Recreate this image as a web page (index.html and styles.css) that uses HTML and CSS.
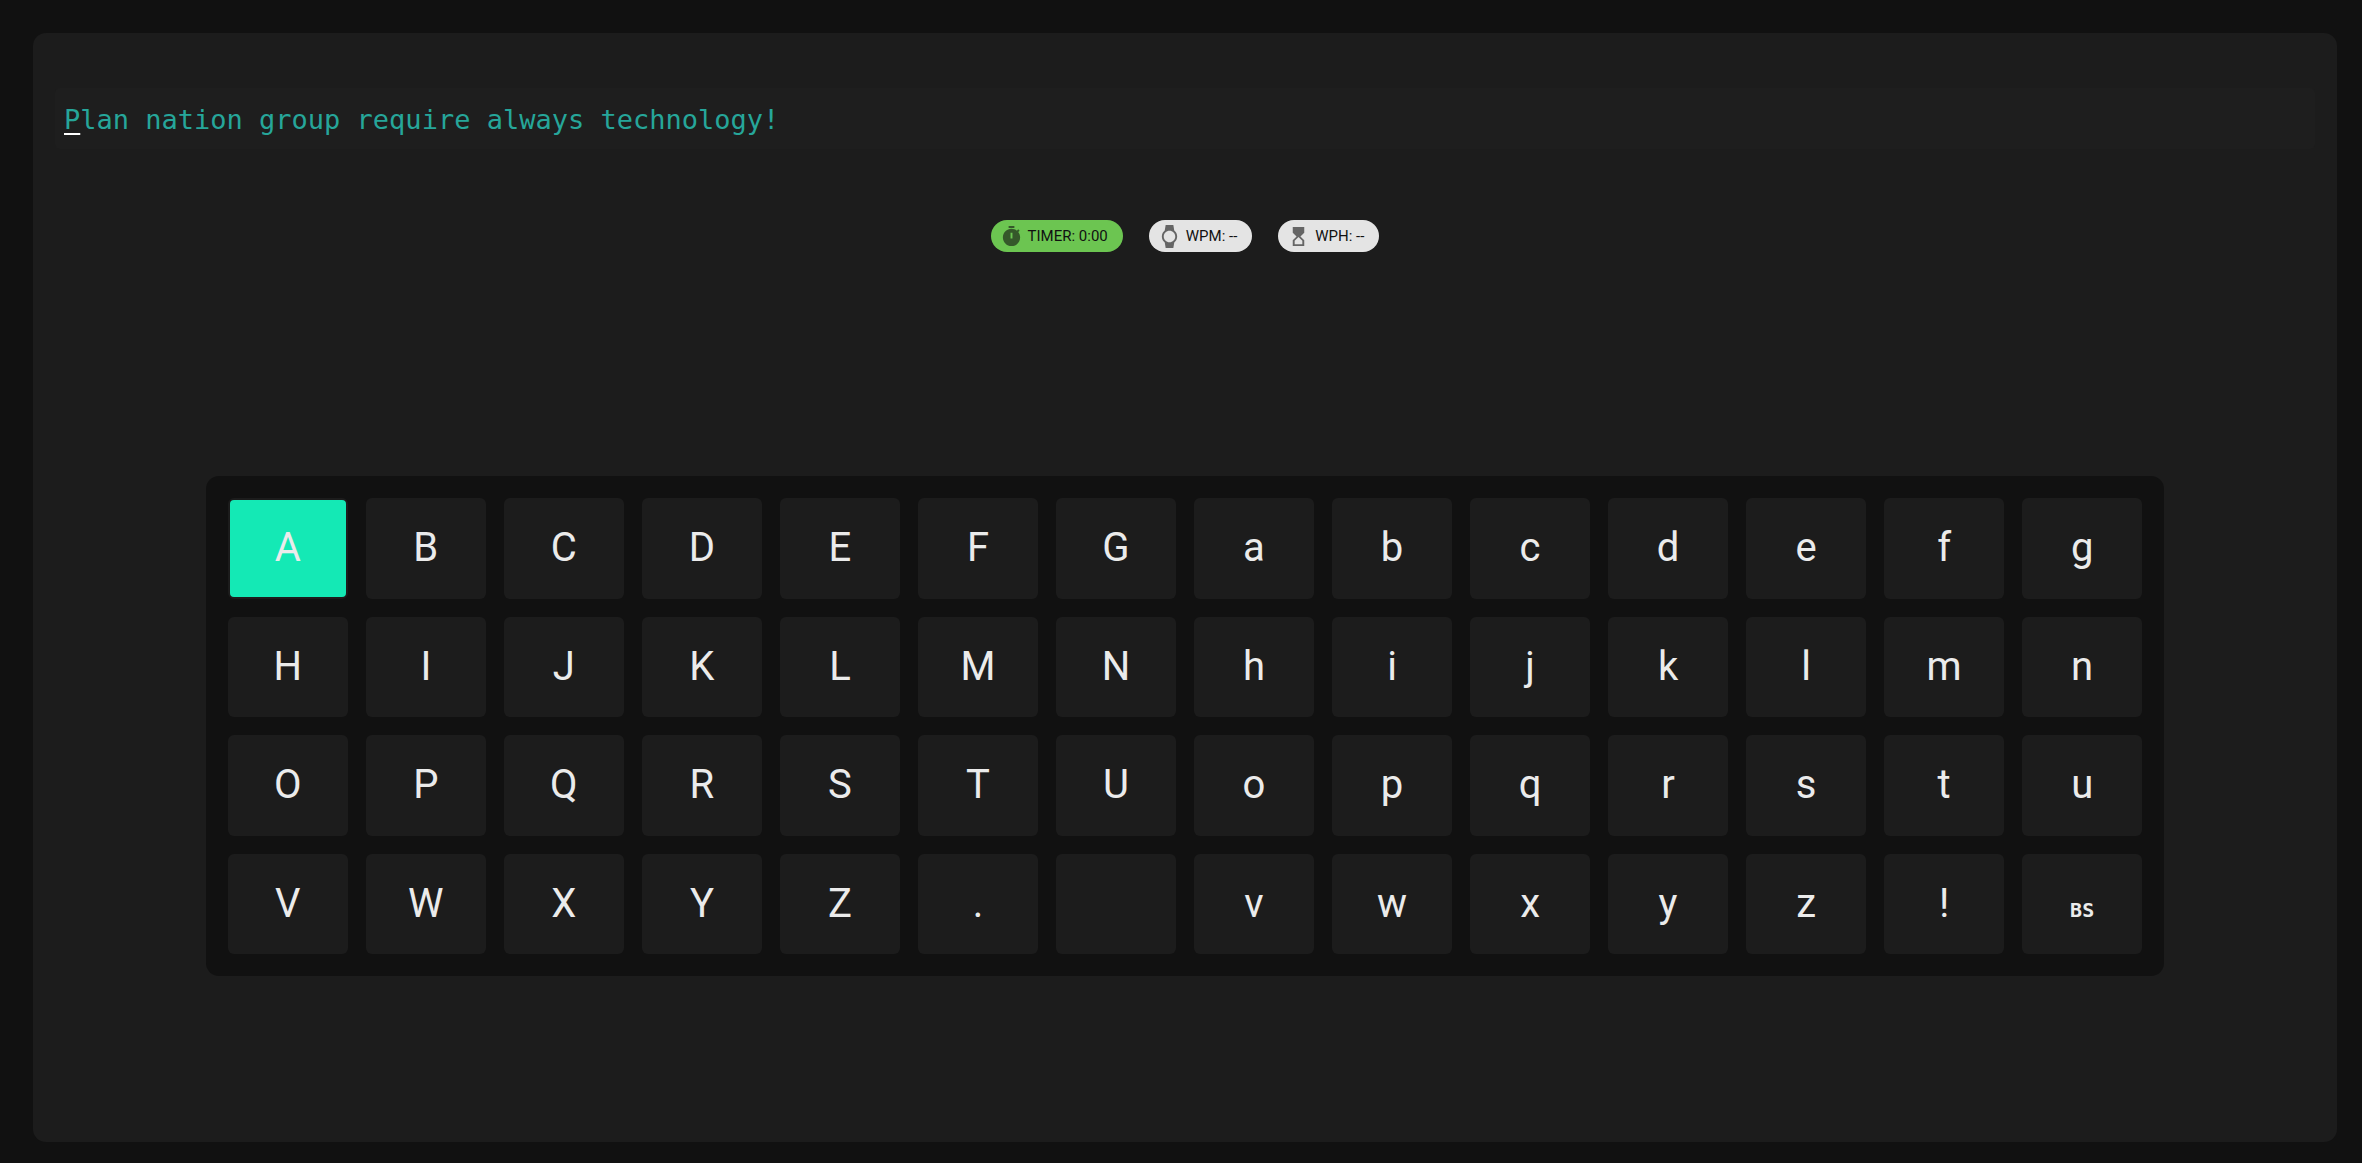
FILE: index.html
```html
<!DOCTYPE html>
<html lang="en">
<head>
<meta charset="utf-8">
<title>Typing practice</title>
<link rel="stylesheet" href="styles.css">
</head>
<body>
<main class="panel">
  <p class="phrase"><span class="cursor">P</span>lan nation group require always technology!</p>
  <div class="stats">
    <div class="chip chip-active">
      <svg class="icon" viewBox="0 0 24 24" aria-hidden="true"><path fill-rule="evenodd" d="M15 1H9v2h6V1zm-4 13h2V8h-2v6zm8.030-6.610l1.420-1.420c-.43-.51-.9-.99-1.410-1.410l-1.420 1.420C16.070 4.740 14.120 4 12 4c-4.970 0-9 4.030-9 9s4.020 9 9 9 9-4.030 9-9c0-2.120-.74-4.070-1.970-5.610z"/></svg>
      <span>TIMER: 0:00</span>
    </div>
    <div class="chip">
      <svg class="icon" viewBox="0 0 24 24" aria-hidden="true"><path d="M20 12c0-2.540-1.190-4.810-3.040-6.270L16 0H8l-.95 5.730C5.190 7.190 4 9.450 4 12s1.190 4.810 3.050 6.270L8 24h8l.96-5.730C18.810 16.810 20 14.540 20 12zM6 12c0-3.310 2.690-6 6-6s6 2.690 6 6-2.690 6-6 6-6-2.690-6-6z"/></svg>
      <span>WPM: --</span>
    </div>
    <div class="chip">
      <svg class="icon" viewBox="0 0 24 24" aria-hidden="true"><path d="M6 2v6l4 4-4 4v6h12v-6l-4-4 4-4V2H6zm10 14.500V20H8v-3.500l4-4 4 4z"/></svg>
      <span>WPH: --</span>
    </div>
  </div>
  <div class="keyboard">
    <button class="key key-selected">A</button><button class="key">B</button><button class="key">C</button><button class="key">D</button><button class="key">E</button><button class="key">F</button><button class="key">G</button>
    <button class="key">a</button><button class="key">b</button><button class="key">c</button><button class="key">d</button><button class="key">e</button><button class="key">f</button><button class="key">g</button>
    <button class="key">H</button><button class="key">I</button><button class="key">J</button><button class="key">K</button><button class="key">L</button><button class="key">M</button><button class="key">N</button>
    <button class="key">h</button><button class="key">i</button><button class="key">j</button><button class="key">k</button><button class="key">l</button><button class="key">m</button><button class="key">n</button>
    <button class="key">O</button><button class="key">P</button><button class="key">Q</button><button class="key">R</button><button class="key">S</button><button class="key">T</button><button class="key">U</button>
    <button class="key">o</button><button class="key">p</button><button class="key">q</button><button class="key">r</button><button class="key">s</button><button class="key">t</button><button class="key">u</button>
    <button class="key">V</button><button class="key">W</button><button class="key">X</button><button class="key">Y</button><button class="key">Z</button><button class="key">.</button><button class="key" aria-label="Space"></button>
    <button class="key">v</button><button class="key">w</button><button class="key">x</button><button class="key">y</button><button class="key">z</button><button class="key">!</button><button class="key"><span class="key-name">BS</span></button>
  </div>
</main>
</body>
</html>
```

FILE: styles.css
```css
* {
  box-sizing: border-box;
}

body {
  margin: 0;
  min-height: 100vh;
  padding: 33px 25px 21px 33px;
  display: flex;
  background: #111;
  font-family: Roboto, sans-serif;
}

.panel {
  flex: 1;
  padding: 55px 0 22px;
  border-radius: 13px;
  background: #1c1c1c;
}

.phrase {
  margin: 0 22px;
  padding: 11px 9px 9px;
  border-radius: 5px;
  background: #1e1e1e;
  color: #26a69a;
  font: 27px/41px "DejaVu Sans Mono", monospace;
}

.cursor {
  text-decoration: underline 2px #fff;
  text-underline-offset: 4px;
}

.stats {
  display: flex;
  justify-content: center;
  gap: 26px;
  margin-top: 71px;
}

.chip {
  display: flex;
  align-items: center;
  gap: 5px;
  height: 32px;
  padding: 0 15px 0 9px;
  border-radius: 16px;
  background: #e4e4e4;
  color: #111;
  font-size: 15px;
}

.chip-active {
  background: #6cc551;
}

.icon {
  width: 23px;
  height: 23px;
  fill: currentColor;
  opacity: 0.6;
}

.keyboard {
  display: grid;
  grid-template-columns: repeat(14, 1fr);
  grid-auto-rows: 1fr;
  gap: 18px;
  width: 85%;
  min-height: 43vh;
  margin: 224px auto 0;
  padding: 22px;
  border-radius: 13px;
  background: #111;
}

.key {
  min-width: 0;
  padding: 0;
  border: 0;
  border-radius: 6px;
  background: #1c1c1c;
  color: #ebebeb;
  font: 40px/48px Roboto, sans-serif;
}

.key-selected {
  border: 2px solid #1c1c1c;
  background: #14e9b5;
}

.key-name {
  font: bold 20px/20px "DejaVu Sans Mono", monospace;
}
```
